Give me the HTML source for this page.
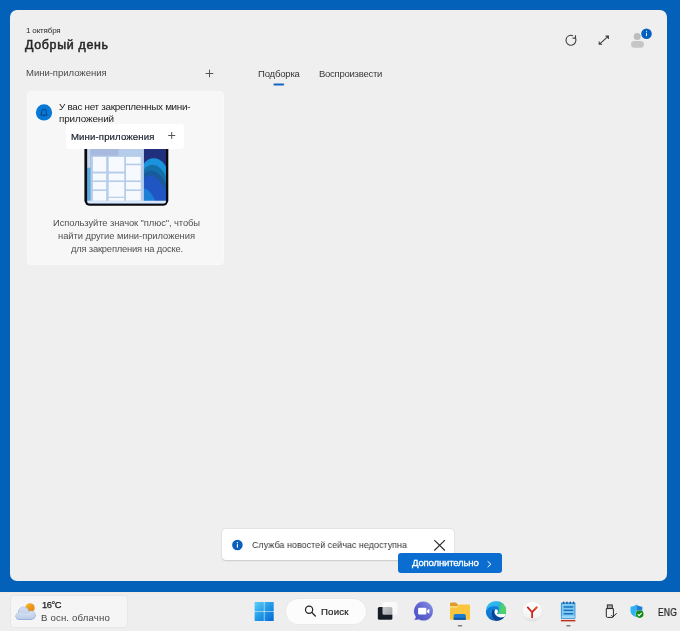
<!DOCTYPE html>
<html lang="ru">
<head>
<meta charset="utf-8">
<title>Widgets</title>
<style>
*{box-sizing:border-box;margin:0;padding:0}
html,body{width:680px;height:631px;overflow:hidden}
body{background:#0361b9;font-family:"Liberation Sans",sans-serif;position:relative;color:#222}
.abs{position:absolute}
.t{position:absolute;white-space:nowrap;line-height:1;will-change:transform}
#panel{position:absolute;left:10px;top:10px;width:657px;height:571px;background:#efefef;border-radius:7px}
#taskbar{position:absolute;left:0;top:592px;width:680px;height:39px;background:#eeeeee;border-top:1px solid #f3e9df}
#card{position:absolute;left:26.6px;top:91.3px;width:197.1px;height:174px;background:#f7f7f7;border-radius:3.5px;border:1px solid #f9f9f9}
#pop{position:absolute;left:65.75px;top:123.9px;width:118.5px;height:25.6px;background:#fff;border-radius:3px}
#notif{position:absolute;left:221.5px;top:528.7px;width:232.8px;height:31.5px;background:#fff;border-radius:4px;box-shadow:0 .6px 1.6px rgba(0,0,0,.14),0 0 0 .5px rgba(0,0,0,.04)}
#more{position:absolute;left:398px;top:552.8px;width:104px;height:20.6px;background:#0a6dcf;border-radius:3px}
#weather{position:absolute;left:10px;top:595px;width:118px;height:33px;background:#f5f5f5;border-radius:4px;border:1px solid #e7e7e7}
#search{position:absolute;left:286px;top:599px;width:80.4px;height:24.5px;background:#fcfcfc;border-radius:12.25px;box-shadow:0 0 0 .6px #e4e4e4}
#ov{position:absolute;left:0;top:0}
</style>
</head>
<body>
<div id="panel"></div>
<div id="card"></div>
<div id="notif"></div>
<div id="more"></div>
<div id="taskbar"></div>
<div id="weather"></div>
<div id="search"></div>

<!-- tablet illustration (traced in 6.8x zoom coords) -->
<svg class="abs" style="left:76px;top:140px" width="100" height="72" viewBox="0 0 680 490">
<path d="M57 40H628V410a38 38 0 0 1-38 38H95a38 38 0 0 1-38-38Z" fill="#0b0b0d"/>
<path d="M76 40H612V416a16 16 0 0 1-16 16H92a16 16 0 0 1-16-16Z" fill="#1f4fc0"/>
<rect x="76" y="40" width="24" height="150" fill="#c9d6ec"/>
<rect x="76" y="190" width="24" height="226" fill="#58aee2"/>
<rect x="462" y="40" width="150" height="376" fill="#20307c"/>
<path d="M462 160C500 110 570 110 612 180V416H462Z" fill="#1b93dc"/>
<path d="M462 200C510 140 580 170 612 250V416H462Z" fill="#1470a8"/>
<path d="M462 230C510 180 575 220 612 300V416H462Z" fill="#195a9c"/>
<path d="M462 260C505 215 570 260 612 350V416H462Z" fill="#2055c4"/>
<path d="M462 330C490 330 520 370 540 416H462Z" fill="#1b7fd6"/>
<rect x="98" y="40" width="364" height="376" fill="#b5cdea"/>
<rect x="98" y="40" width="192" height="66" fill="#a9b9de"/>
<g fill="#f6f9fe">
<rect x="115" y="115" width="90" height="100"/><rect x="115" y="228" width="90" height="47"/><rect x="115" y="286" width="90" height="50"/><rect x="115" y="347" width="90" height="66"/>
<rect x="222" y="115" width="106" height="100"/><rect x="222" y="228" width="106" height="47"/><rect x="222" y="286" width="106" height="100"/><rect x="222" y="394" width="106" height="20"/>
<rect x="340" y="115" width="100" height="46"/><rect x="340" y="172" width="100" height="103"/><rect x="340" y="286" width="100" height="50"/><rect x="340" y="347" width="100" height="66"/>
</g>
<path d="M76 414H612V418a14 14 0 0 1-14 14H90a14 14 0 0 1-14-14Z" fill="#dbe7f6"/>
</svg>
<div id="pop"></div>

<div class="t" id="t1" style="left:25.70px;top:27.02px;font-size:8.0px;font-weight:normal;color:#2c2c2c;letter-spacing:-0.165px;">1 октября</div>
<div class="t" id="t2" style="left:25.10px;top:39.02px;font-size:12.4px;font-weight:normal;color:#262626;letter-spacing:0.690px;-webkit-text-stroke:.5px #262626;">Добрый день</div>
<div class="t" id="t3" style="left:26.00px;top:68.02px;font-size:9.5px;font-weight:normal;color:#4a4a4a;letter-spacing:-0.016px;">Мини-приложения</div>
<div class="t" id="t4" style="left:257.60px;top:69.02px;font-size:9.5px;font-weight:normal;color:#333;letter-spacing:-0.176px;">Подборка</div>
<div class="t" id="t5" style="left:318.80px;top:69.02px;font-size:9.5px;font-weight:normal;color:#3a3a3a;letter-spacing:-0.252px;">Воспроизвести</div>
<div class="t" id="t6" style="left:58.75px;top:102.02px;font-size:9.9px;font-weight:normal;color:#222;letter-spacing:-0.291px;">У вас нет закрепленных мини-</div>
<div class="t" id="t7" style="left:58.75px;top:114.02px;font-size:9.9px;font-weight:normal;color:#222;letter-spacing:-0.120px;">приложений</div>
<div class="t" id="t8" style="left:70.75px;top:132.02px;font-size:9.6px;font-weight:normal;color:#1a2230;letter-spacing:0.124px;-webkit-text-stroke:.2px #1a2230;">Мини-приложения</div>
<div class="t" id="t9" style="left:53.00px;top:218.02px;font-size:9.4px;font-weight:normal;color:#505050;letter-spacing:-0.088px;">Используйте значок &quot;плюс&quot;, чтобы</div>
<div class="t" id="t10" style="left:58.00px;top:231.02px;font-size:9.4px;font-weight:normal;color:#505050;letter-spacing:-0.033px;">найти другие мини-приложения</div>
<div class="t" id="t11" style="left:70.50px;top:244.02px;font-size:9.4px;font-weight:normal;color:#505050;letter-spacing:-0.197px;">для закрепления на доске.</div>
<div class="t" id="t12" style="left:252.30px;top:540.02px;font-size:9.8px;font-weight:normal;color:#333;letter-spacing:0.000px;transform-origin:0 50%;transform:scaleX(0.9188);">Служба новостей сейчас недоступна</div>
<div class="t" id="t13" style="left:412.00px;top:558.02px;font-size:9.6px;font-weight:normal;color:#fff;letter-spacing:-0.189px;-webkit-text-stroke:.3px #fff;">Дополнительно</div>
<div class="t" id="t14" style="left:41.60px;top:601.02px;font-size:9.3px;font-weight:normal;color:#1c1c1c;letter-spacing:-0.445px;-webkit-text-stroke:.25px #1c1c1c;">16°C</div>
<div class="t" id="t15" style="left:41.20px;top:613.02px;font-size:9.6px;font-weight:normal;color:#444;letter-spacing:0.172px;">В осн. облачно</div>
<div class="t" id="t16" style="left:321.10px;top:607.02px;font-size:9.6px;font-weight:normal;color:#222;letter-spacing:0.221px;-webkit-text-stroke:.2px #222;">Поиск</div>
<div class="t" id="t17" style="left:658.20px;top:608.02px;font-size:10.2px;font-weight:normal;color:#222;letter-spacing:0.000px;-webkit-text-stroke:.2px #222;transform-origin:0 50%;transform:scaleX(0.8515);">ENG</div>

<svg id="ov" width="680" height="631" viewBox="0 0 680 631">

<defs>
<linearGradient id="gsun" x1="0" y1="0" x2="1" y2="1"><stop offset="0" stop-color="#fcc222"/><stop offset=".5" stop-color="#ec961c"/><stop offset="1" stop-color="#e08818"/></linearGradient>
<linearGradient id="gcl" x1="0" y1="0" x2="0" y2="1"><stop offset="0" stop-color="#d3dff0"/><stop offset="1" stop-color="#b9cbe8"/></linearGradient>
<linearGradient id="gwin" gradientUnits="userSpaceOnUse" x1="254.6" y1="602" x2="273.7" y2="621"><stop offset="0" stop-color="#62d0f7"/><stop offset=".5" stop-color="#1f9be8"/><stop offset="1" stop-color="#0667d6"/></linearGradient>
<linearGradient id="gchat" gradientUnits="userSpaceOnUse" x1="414" y1="620" x2="433" y2="602"><stop offset="0" stop-color="#4a4fc4"/><stop offset=".55" stop-color="#6468d0"/><stop offset="1" stop-color="#8a9be8"/></linearGradient>
<linearGradient id="gedge" gradientUnits="userSpaceOnUse" x1="490" y1="601" x2="499" y2="622"><stop offset="0" stop-color="#35bef2"/><stop offset=".3" stop-color="#2ab2ee"/><stop offset=".5" stop-color="#1483dc"/><stop offset="1" stop-color="#0a4a98"/></linearGradient>
<linearGradient id="gedge2" gradientUnits="userSpaceOnUse" x1="497.800" y1="606" x2="502.500" y2="607"><stop offset="0" stop-color="#2fb4d4"/><stop offset=".55" stop-color="#3cc0a0"/><stop offset="1" stop-color="#4fd464"/></linearGradient>
<linearGradient id="gya" x1="0" y1="0" x2="0" y2="1"><stop offset="0" stop-color="#ffffff"/><stop offset=".75" stop-color="#f4f4f4"/><stop offset="1" stop-color="#dedede"/></linearGradient>
<linearGradient id="gwht" gradientUnits="userSpaceOnUse" x1="382.5" y1="602" x2="397.4" y2="614.7"><stop offset="0" stop-color="#fff" stop-opacity=".82"/><stop offset="1" stop-color="#fff" stop-opacity=".55"/></linearGradient>
</defs>
<!-- weather icon -->
<circle cx="30" cy="607.9" r="4.7" fill="url(#gsun)"/>
<g fill="#8fa8de" stroke="#8fa8de" stroke-width="1"><circle cx="23.6" cy="612.1" r="5"/><circle cx="31.3" cy="615.3" r="4"/><circle cx="19.2" cy="616.2" r="3.3"/><rect x="19.2" y="613.5" width="12.1" height="6"/></g>
<g fill="url(#gcl)"><circle cx="23.6" cy="612.1" r="5"/><circle cx="31.3" cy="615.1" r="4"/><circle cx="19.2" cy="616" r="3.3"/><rect x="19.2" y="613.5" width="12.1" height="5.7"/></g>
<!-- windows logo -->
<g fill="url(#gwin)"><rect x="254.6" y="602" width="9.25" height="9.25" rx=".6"/><rect x="264.45" y="602" width="9.25" height="9.25" rx=".6"/><rect x="254.6" y="611.85" width="9.25" height="9.25" rx=".6"/><rect x="264.45" y="611.85" width="9.25" height="9.25" rx=".6"/></g>
<!-- search magnifier -->
<circle cx="309.1" cy="609.7" r="3.6" stroke="#222" stroke-width="1.2" fill="none"/>
<path d="M311.8 612.4l3.5 3.6" stroke="#222" stroke-width="1.3" stroke-linecap="round"/>
<!-- task view -->
<rect x="377.3" y="606.4" width="15.6" height="13.9" rx="2" fill="#f8f8f8"/>
<rect x="377.8" y="606.9" width="14.6" height="12.9" rx="1.5" fill="#161c27"/>
<rect x="382.5" y="601.9" width="14.9" height="12.8" rx="1.5" fill="url(#gwht)"/>
<!-- chat -->
<path d="M423.5 601.6a9.5 9.5 0 1 1-4.9 17.65c-1.3.5-2.9.75-4.4.4 1-.8 1.5-1.8 1.6-3A9.5 9.5 0 0 1 423.5 601.6z" fill="url(#gchat)"/>
<rect x="418.1" y="607.7" width="8.3" height="6.8" rx="1.2" fill="#fff"/>
<path d="M427.1 610.2l2.3-1.5v5l-2.3-1.5z" fill="#fff"/>
<!-- explorer -->
<path d="M450 603.6a1.2 1.2 0 0 1 1.2-1.2h4.6l1.9 1.9h-7.7z" fill="#e09a28"/>
<rect x="450" y="603.9" width="7.8" height="2.6" rx=".8" fill="#e09a28"/>
<path d="M450 606.5l7-.1 1.6-1.9h10.2a1.2 1.2 0 0 1 1.2 1.2v13a1.1 1.1 0 0 1-1.1 1.1h-17.8a1.1 1.1 0 0 1-1.1-1.1z" fill="#fbc63e"/>
<rect x="450" y="606.3" width="7.4" height="1.3" fill="#fde08c"/>
<path d="M453.7 619.8v-4.2a1.7 1.7 0 0 1 1.7-1.7h8.7a1.7 1.7 0 0 1 1.7 1.7v4.2z" fill="#1b7ad4"/>
<rect x="453.7" y="617.8" width="12.1" height="2" fill="#0e58a6"/>
<rect x="457.6" y="625" width="4.7" height="1.6" rx=".8" fill="#7c7c7c"/>
<!-- edge -->
<clipPath id="ce"><circle cx="496" cy="611" r="10.1"/></clipPath>
<g clip-path="url(#ce)">
<rect x="485" y="600" width="22" height="22" fill="url(#gedge)"/>
<path d="M485 614c1-4.800 4.500-7.800 9-7.800 2.500 0 4.300.8 5.500 2.300l-1.500 3c-1-1.800-2.600-2.600-4.500-2.300-2.500.4-3.800 2.500-3.600 5.300l-3 5-2-2z" fill="#0c78d6" opacity=".92"/>
<path d="M498.700 600H507V614.100H497.600C499.400 610.500 498.300 606 498.700 600z" fill="url(#gedge2)"/>
<path d="M492.300 609.500C490 615.500 493.500 620.500 499 621.600 503 621.200 506 618.500 506.800 615.300 503 618.300 498 618.300 495.600 615.500 494.200 613.800 494 611.500 494.600 609.800z" fill="#0a4496"/>
<path d="M495.900 609.300a2 2 0 0 1 2 2c0 1-.3 1.900-.9 2.800h8.700l.6 1.300c-2.600 2.200-6.600 2.800-9.400.700-2.100-1.600-2.700-3.800-2.100-5.300.2-.800.600-1.500 1.100-1.500z" fill="#fdfdfd"/>
</g>
<!-- yandex -->
<circle cx="532.3" cy="611.700" r="9.900" fill="#d8d8d8" opacity=".6"/>
<circle cx="532.3" cy="611.300" r="9.600" fill="url(#gya)"/>
<path d="M527.300 606.900l4.800 5.300v5.800M537.200 606.900l-5.100 5.300" stroke="#cc1f12" stroke-width="1.700" fill="none" stroke-linejoin="round"/>
<path d="M535.400 608.800l1.800-1.900" stroke="#e8641c" stroke-width="1.700"/>
<!-- notepad -->
<rect x="560.900" y="602.600" width="14.500" height="16.400" rx="1" fill="#2a8ad6"/>
<rect x="561.700" y="603.800" width="12.900" height="14.400" fill="#7ecaf4"/>
<rect x="561.700" y="615.900" width="12.900" height="2.300" fill="#9ad6f8"/>
<g fill="#1a5c9c"><rect x="562.900" y="601.400" width="1.500" height="2.600" rx=".7"/><rect x="566.200" y="601.400" width="1.500" height="2.600" rx=".7"/><rect x="569.500" y="601.400" width="1.500" height="2.600" rx=".7"/><rect x="572.800" y="601.400" width="1.500" height="2.600" rx=".7"/></g>
<g fill="#1a70b8"><rect x="563.600" y="606.200" width="9.700" height="1.500"/><rect x="563.600" y="609.600" width="9.700" height="1.500"/><rect x="563.600" y="613" width="9.700" height="1.500"/></g>
<rect x="560.900" y="619.900" width="14.500" height="1.500" fill="#c2321c"/>
<rect x="566.200" y="625" width="4.400" height="1.500" rx=".75" fill="#7c7c7c"/>
<!-- usb -->
<rect x="607.300" y="604.900" width="5" height="4" fill="#a4a4a4" stroke="#222" stroke-width=".9"/>
<path d="M606.300 608.600h7.100v7.600a1.200 1.200 0 0 1-1.200 1.200h-4.700a1.200 1.200 0 0 1-1.200-1.200z" fill="#f4f4f4" stroke="#1c1c1c" stroke-width=".95"/>
<path d="M611.300 615.200l1.600 1.600 3.800-3.500" stroke="#1c1c1c" stroke-width=".95" fill="none"/>
<!-- shield -->
<path d="M636.300 604.500c1.700 1.400 3.700 2.100 6 2.200v4.400c0 3-2.400 5-6 6.100z" fill="#1a7fda"/>
<path d="M636.300 604.500c-1.700 1.400-3.700 2.100-5.800 2.200v4.400c0 3 2.300 5 5.800 6.100z" fill="#2fb2f2"/>
<circle cx="639.700" cy="614.100" r="4.200" fill="#efefef"/>
<circle cx="639.700" cy="614.100" r="3.800" fill="#128a14"/>
<path d="M637.700 614.200l1.400 1.400 2.600-2.700" stroke="#fff" stroke-width="1.100" fill="none"/>
<!-- tab underline -->
<rect x="273.4" y="83.5" width="10.8" height="2" rx="1" fill="#1565c4"/>
<!-- plus header -->
<path d="M205.7 73.5h7.6M209.5 69.7v7.6" stroke="#555" stroke-width="1" fill="none"/>
<!-- refresh -->
<path d="M573 35.67A5 5 0 1 0 575.5 38.1" stroke="#404040" stroke-width="1.1" fill="none"/>
<path d="M575.5 35.2V38.1H572.6" stroke="#404040" stroke-width="1.1" fill="none"/>
<!-- expand -->
<path d="M599.2 44.3L608.4 36.1M605.5 36.1H608.4V39M599.2 41.4V44.3H602.1" stroke="#404040" stroke-width="1.1" fill="none"/>
<!-- avatar -->
<circle cx="637.2" cy="36.4" r="3.5" fill="#bdbdbd"/>
<rect x="631.1" y="41" width="12.8" height="6.7" rx="3.3" fill="#c6c6c6"/>
<circle cx="646.5" cy="33.8" r="5.8" fill="#f6f6f6"/>
<circle cx="646.5" cy="33.8" r="5.3" fill="#0560c0"/>
<rect x="646" y="32.8" width="1" height="3.3" fill="#dceafa"/><rect x="646" y="30.8" width="1" height="1.1" fill="#dceafa"/>
<!-- bell -->
<circle cx="44" cy="112.45" r="8.1" fill="#0878d6"/>
<path d="M40.6 115.2h6.6l-.9-1.3v-2.2a2.4 2.4 0 0 0-4.8 0v2.2z" fill="none" stroke="#0b3263" stroke-width=".7" stroke-linejoin="round"/>
<path d="M43 115.4a.9.9 0 0 0 1.8 0z" fill="#0b2a55"/>
<!-- popup plus -->
<path d="M168.2 135.5h7M171.7 132v7" stroke="#555" stroke-width="1" fill="none"/>
<!-- info -->
<circle cx="237.4" cy="545" r="5.3" fill="#0a5fba"/>
<rect x="236.85" y="544.2" width="1.1" height="3.4" fill="#fff"/><rect x="236.85" y="542" width="1.1" height="1.3" fill="#fff"/>
<!-- close X -->
<path d="M434.3 540.1l10.6 10.4M444.9 540.1l-10.6 10.4" stroke="#2a2a2a" stroke-width="1.1" fill="none"/>
<!-- chevron -->
<path d="M487.6 561.3l3.3 2.9-3.3 2.9" stroke="#fff" stroke-width="1" fill="none"/>
</svg>
</body>
</html>
